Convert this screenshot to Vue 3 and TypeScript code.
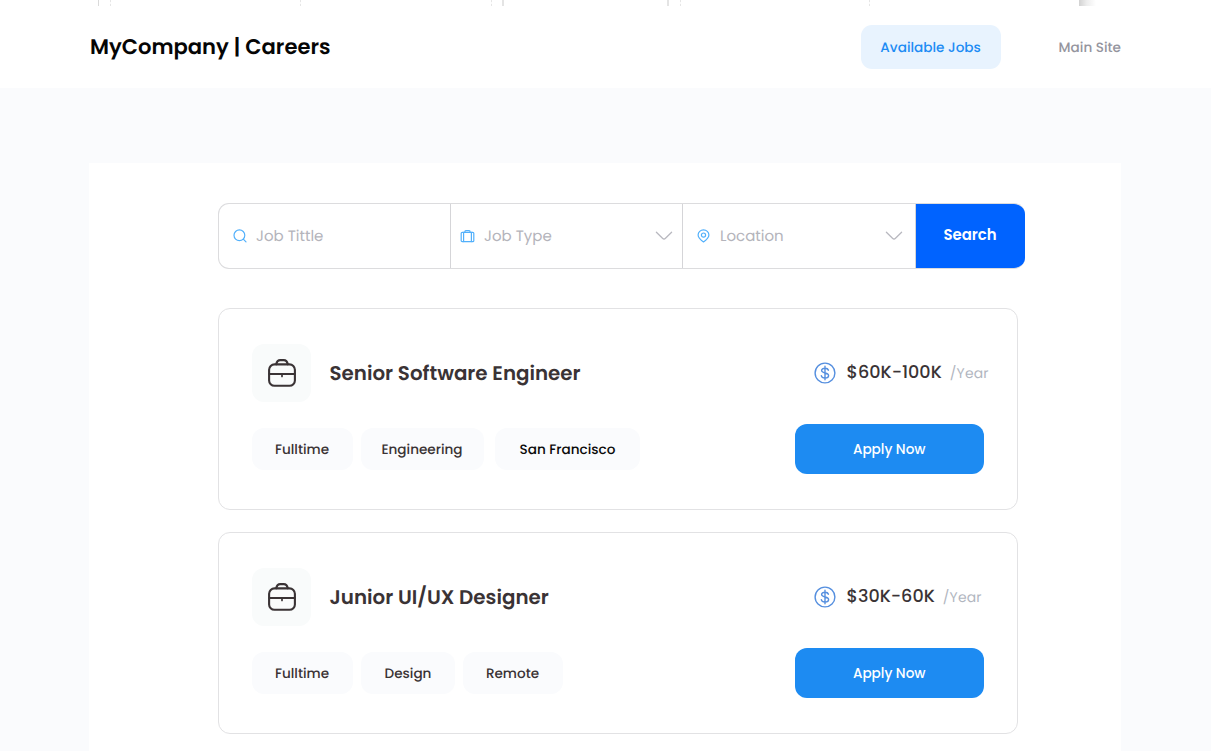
<script setup lang="ts">
interface Chip {
  label: string
  size: string
}
interface Job {
  title: string
  salary: string
  chips: Chip[]
}

const jobs: Job[] = [
  {
    title: 'Senior Software Engineer',
    salary: '$60K-100K',
    chips: [
      { label: 'Fulltime', size: 'fulltime' },
      { label: 'Engineering', size: 'engineering' },
      { label: 'San Francisco', size: 'city' },
    ],
  },
  {
    title: 'Junior UI/UX Designer',
    salary: '$30K-60K',
    chips: [
      { label: 'Fulltime', size: 'fulltime' },
      { label: 'Design', size: 'design' },
      { label: 'Remote', size: 'remote' },
    ],
  },
]
</script>

<template>
  <div class="page">
    <header class="header">
      <div class="ticks">
        <i class="t1"></i><i class="t2 dash"></i><i class="t3 dash"></i><i class="t4 dash"></i><i class="t5"></i>
        <i class="t6"></i><i class="t7 dash"></i><i class="t8 dash"></i><i class="t9"></i>
      </div>
      <div class="brand">MyCompany | Careers</div>
      <nav class="nav">
        <a class="nav-active">Available Jobs</a>
        <a class="nav-link">Main Site</a>
      </nav>
    </header>

    <main class="panel">
      <form class="search">
        <div class="field title-field">
          <svg class="icon" width="14" height="14" viewBox="0 0 14 14">
            <circle cx="6.4" cy="6.3" r="5.4" />
            <path d="M10.3 10.2 13 12.9" />
          </svg>
          <span>Job Tittle</span>
        </div>
        <div class="field type-field">
          <svg class="icon" width="15" height="14" viewBox="0 0 15 14">
            <rect x="1.2" y="3.3" width="12.6" height="9.4" rx="1" />
            <path d="M3.6 3.4v9.2M11.4 3.4v9.2M4.9 3.2V2.7q0-1 1-1h3.2q1 0 1 1v.5" />
          </svg>
          <span>Job Type</span>
          <svg class="chevron" width="18" height="10" viewBox="0 0 18 10">
            <path d="M1.4 1.3 7.5 7.3Q9 8.8 10.5 7.3L16.6 1.3" />
          </svg>
        </div>
        <div class="field place-field">
          <svg class="icon" width="13" height="14" viewBox="0 0 13 14">
            <path d="M6.5 13C4.1 11.3 1.1 9.1 1.1 6a5.4 5.1 0 0 1 10.8 0c0 3.1-3 5.3-5.4 7Z" />
            <circle cx="6.5" cy="6.1" r="2.1" />
          </svg>
          <span>Location</span>
          <svg class="chevron" width="18" height="10" viewBox="0 0 18 10">
            <path d="M1.4 1.3 7.5 7.3Q9 8.8 10.5 7.3L16.6 1.3" />
          </svg>
        </div>
        <button class="search-btn" type="button">Search</button>
      </form>

      <article v-for="job in jobs" :key="job.title" class="card">
        <div class="row top">
          <div class="badge">
            <svg width="30" height="30" viewBox="0 0 30 30">
              <rect class="case" x="2.1" y="6.4" width="25.8" height="21.4" rx="5.4" />
              <path class="case" d="M9.2 6.3C9.8 3.4 11.2 2.1 13.2 2.1h3.6c2 0 3.4 1.3 4 4.2" />
              <path class="case" d="M2.5 16h25" />
              <path class="case clasp" d="M15 16.5v2" />
            </svg>
          </div>
          <h2 class="job-title">{{ job.title }}</h2>
          <div class="pay">
            <svg class="coin" width="22" height="22" viewBox="0 0 22 22">
              <circle cx="11" cy="11" r="9.9" />
              <path d="M14.4 8.2C14 6.9 12.7 6.2 11 6.2c-2 0-3.4.9-3.4 2.4 0 3.3 7 1.5 7 4.9 0 1.5-1.5 2.5-3.6 2.5-2 0-3.4-.9-3.7-2.4M11 4.3v13.4" />
            </svg>
            <span class="amount">{{ job.salary }}</span>
            <span class="period">/Year</span>
          </div>
        </div>
        <div class="row bottom">
          <div v-for="chip in job.chips" :key="chip.label" class="chip" :class="chip.size">{{ chip.label }}</div>
          <button class="apply" type="button">Apply Now</button>
        </div>
      </article>
    </main>
  </div>
</template>

<style>
body {
  margin: 0;
  overflow: hidden;
}
</style>

<style scoped>
* {
  box-sizing: border-box;
}
.page {
  width: 1211px;
  height: 751px;
  overflow: hidden;
  background: #fafbfd;
  font-family: Poppins, Inter, "Liberation Sans", sans-serif;
  font-weight: 500;
  font-size: 13.6px;
  color: #3a3335;
  white-space: nowrap;
  text-rendering: geometricPrecision;
}
button {
  border: 0;
  padding: 0;
  font: inherit;
  color: #fff;
  display: flex;
  align-items: center;
  justify-content: center;
}
svg {
  display: block;
  flex: none;
  fill: none;
  stroke-linecap: round;
  stroke-linejoin: round;
}
.header {
  position: relative;
  height: 88px;
  padding: 6px 90px 0;
  background: #fff;
  display: flex;
  justify-content: space-between;
}
.ticks {
  position: absolute;
  top: 0;
  left: 0;
}
.ticks i {
  position: absolute;
  top: 0;
  width: 1px;
  height: 6px;
  background: #dadada;
}
.ticks .dash {
  background: linear-gradient(#e6e6e6 0 2px, #fafafa 2px 4px, #e6e6e6 4px);
}
.ticks .t1 { left: 98px; }
.ticks .t2 { left: 110px; }
.ticks .t3 { left: 300px; }
.ticks .t4 { left: 491px; }
.ticks .t5 { left: 502px; width: 2px; background: #e4e4e4; }
.ticks .t6 { left: 667px; width: 2px; background: #e4e4e4; }
.ticks .t7 { left: 680px; }
.ticks .t8 { left: 869px; }
.ticks .t9 {
  left: 1079px;
  width: 17px;
  background: linear-gradient(90deg, #d2d2d2, #ededed 45%, #fff);
}
.brand {
  height: 83px;
  display: flex;
  align-items: center;
  font-size: 21.1px;
  font-weight: 600;
  color: #050505;
}
.nav {
  display: flex;
  height: 82px;
  align-items: center;
}
.nav-active {
  width: 140px;
  height: 44px;
  padding-top: 1px;
  border-radius: 11px;
  background: #e8f3fe;
  color: #1d8cf4;
  display: flex;
  align-items: center;
  justify-content: center;
  margin-right: 58px;
}
.nav-link {
  padding-top: 1px;
  color: #95959e;
}
.panel {
  width: 1032px;
  height: 588px;
  margin: 75px 0 0 89px;
  padding: 40px 0 0 129px;
  background: #fff;
}
.search {
  display: flex;
  width: 807px;
  height: 66px;
  border: 1px solid #dcdcde;
  border-right: 0;
  border-radius: 11px;
  overflow: hidden;
  font-size: 15px;
  font-weight: 400;
  color: #b4b4bb;
}
.field {
  display: flex;
  align-items: center;
  gap: 9px;
  border-right: 1px solid #d5d5d8;
}
.field span {
  padding-top: 1px;
}
.title-field {
  width: 232px;
  padding-left: 14px;
}
.type-field {
  width: 232px;
  padding-left: 9px;
}
.place-field {
  width: 233px;
  padding-left: 14px;
  gap: 10px;
}
.icon {
  stroke: #52b0fb;
  stroke-width: 1.2;
}
.chevron {
  margin-left: auto;
  margin-right: 9px;
  stroke: #b9b9c0;
  stroke-width: 1.3;
}
.place-field .chevron {
  margin-right: 12px;
}
.search-btn {
  flex: 1;
  background: #0063ff;
  font-size: 14.9px;
  font-weight: 600;
  padding: 0 1px 3px 0;
}
.card {
  width: 800px;
  height: 202px;
  margin-top: 39px;
  padding: 35px 29px 0 33px;
  border: 1px solid #e2e2e4;
  border-radius: 12px;
}
.card + .card {
  margin-top: 22px;
}
.row {
  display: flex;
  align-items: center;
}
.top {
  height: 58px;
}
.badge {
  width: 58.5px;
  height: 58px;
  border-radius: 12px;
  background: #f9fbfb;
  display: flex;
  align-items: center;
  justify-content: center;
  padding: 0 0 0 2px;
}
.case {
  stroke: #3a3335;
  stroke-width: 2.1;
}
.clasp {
  stroke-width: 1.7;
}
.job-title {
  margin: 0 0 0 19px;
  font-size: 19.85px;
  font-weight: 600;
}
.pay {
  display: flex;
  align-items: center;
  width: 174px;
  margin-left: auto;
}
.coin {
  stroke: #558fdf;
  stroke-width: 1.4;
}
.amount {
  margin-left: 10.5px;
  font-size: 17.6px;
}
.period {
  margin-left: 8px;
  padding-top: 1px;
  font-size: 13.9px;
  font-weight: 400;
  letter-spacing: 0.2px;
  color: #b1b6c0;
}
.bottom {
  height: 50px;
  margin-top: 22px;
}
.chip {
  height: 42px;
  padding-top: 1px;
  border-radius: 12px;
  background: #fafbfd;
  display: flex;
  align-items: center;
  justify-content: center;
  margin-right: 8px;
}
.fulltime { width: 101px; padding-right: 1px; }
.engineering { width: 123px; padding-right: 1px; margin-right: 11px; }
.city { width: 145px; color: #0a0a0a; }
.design { width: 94px; }
.remote { width: 100px; padding-right: 1px; }
.apply {
  width: 189.5px;
  height: 50px;
  padding-top: 1px;
  margin-left: auto;
  margin-right: 4px;
  border-radius: 12px;
  background: #1d8bf2;
}
</style>
